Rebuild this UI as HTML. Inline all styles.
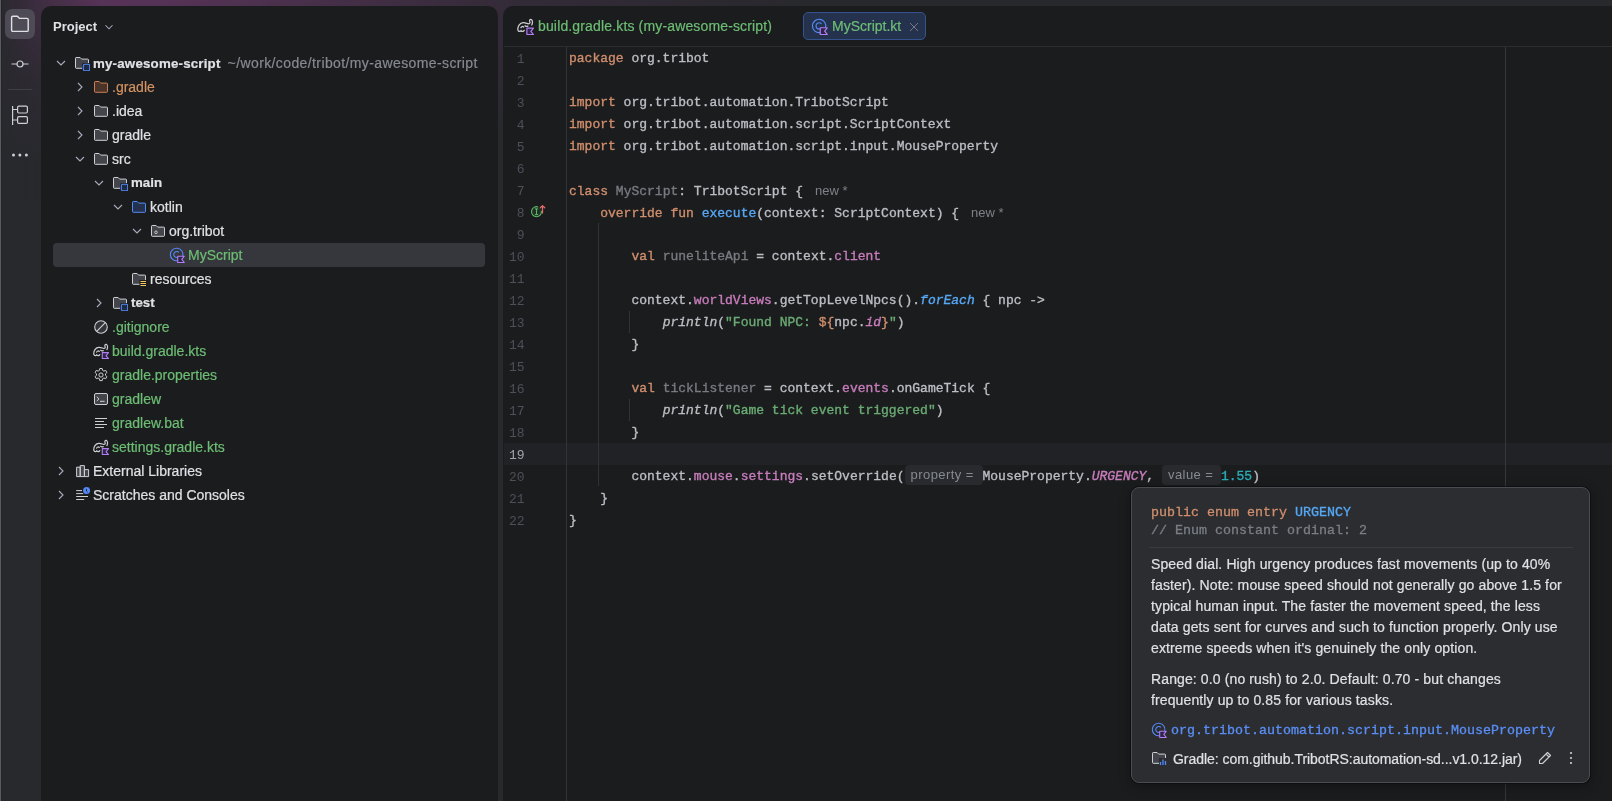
<!DOCTYPE html>
<html><head><meta charset="utf-8">
<style>
*{box-sizing:border-box;margin:0;padding:0}
html,body{width:1612px;height:801px;overflow:hidden}
body{position:relative;font-family:"Liberation Sans",sans-serif;color:#dfe1e5;background:#28292d;}
#bg1{position:absolute;left:0;top:0;width:1612px;height:801px;
background:radial-gradient(ellipse 720px 175px at 100px -15px, rgba(94,52,93,1) 0%, rgba(82,50,84,.92) 22%, rgba(62,45,66,.6) 55%, rgba(40,41,45,0) 100%);}
#bg2{position:absolute;left:0;top:0;width:120px;height:200px;
background:linear-gradient(to right, rgba(40,41,45,.95) 0px, rgba(40,41,45,.5) 40px, rgba(40,41,45,0) 100px);}
.abs{position:absolute}
#strip-edge{position:absolute;left:0;top:0;width:1px;height:801px;background:#5a5c61}
#strip-edge2{position:absolute;left:1px;top:0;width:1px;height:801px;background:#232428}
.island{position:absolute;background:#1b1c1e;border-radius:10px 10px 0 0}
#proj{left:41px;top:6px;width:457px;height:820px}
#edit{left:503px;top:6px;width:1130px;height:820px}
.row{position:absolute;height:24px;line-height:24px;font-size:14px;white-space:pre;color:#dfe1e5;-webkit-text-stroke:0.2px currentColor}
.g{color:#6dbd74 !important}
.o{color:#d39263 !important}
.b{font-weight:bold;font-size:13.3px}
.ln{position:absolute;left:500.6px;width:24px;text-align:right;font-family:"Liberation Mono",monospace;font-size:13px;color:#52565e;height:22px;line-height:22px;margin-top:1.5px}
.cl{position:absolute;left:569px;height:22px;line-height:22px;margin-top:1px;font-family:"Liberation Mono",monospace;font-size:13px;color:#bcbec4;white-space:pre;-webkit-text-stroke:0.35px currentColor}
.k{color:#cf8e6d}
.fn{color:#56a8f5}
.pr{color:#c77dbb}
.it{font-style:italic}
.s{color:#6aab73}
.num{color:#2aacb8}
.gr{color:#777b81}
.hint{font-family:"Liberation Sans",sans-serif;font-size:13px;color:#7d8087;margin-left:12px;-webkit-text-stroke:0}
.inlay{display:inline-block;font-family:"Liberation Sans",sans-serif;font-size:13px;letter-spacing:.45px;color:#868a91;background:#282a2e;border-radius:4px;height:20px;line-height:19px;vertical-align:top;margin-top:-1px;-webkit-text-stroke:0}
.tab{position:absolute;height:27px;line-height:29px;font-size:14px;white-space:pre;-webkit-text-stroke:0.2px currentColor}
#popup{position:absolute;left:1131px;top:487px;width:459px;height:296px;background:#2b2d30;border:1px solid #4a4c51;border-radius:8px;box-shadow:0 0 0 1px rgba(10,10,12,.6),0 3px 12px rgba(0,0,0,.35)}
.pm{position:absolute;left:1151px;font-family:"Liberation Mono",monospace;font-size:13.33px;white-space:pre;height:18px;line-height:18px;-webkit-text-stroke:0.3px currentColor}
.pt{position:absolute;left:1151px;font-size:14px;white-space:pre;color:#dfe1e5;height:21px;line-height:23px;letter-spacing:.12px;-webkit-text-stroke:0.2px currentColor}
</style></head>
<body>
<div id="root" style="position:absolute;left:0;top:0;width:1612px;height:801px;will-change:transform">
<div id="bg1"></div>
<div id="bg2"></div>
<div id="strip-edge"></div><div id="strip-edge2"></div>

<!-- left tool strip -->
<div class="abs" style="left:5px;top:9px;width:30px;height:30px;border-radius:7px;background:#4e4a56"></div>
<svg class="abs" style="left:10px;top:14px" width="20" height="20" viewBox="0 0 20 20"><path d="M1.6 3.6c0-.7.5-1.3 1.2-1.3h4.6l2.2 2.1h7.4c.7 0 1.2.5 1.2 1.2v10.6c0 .7-.5 1.2-1.2 1.2H2.8c-.7 0-1.2-.5-1.2-1.2z" fill="none" stroke="#dfe1e5" stroke-width="1.4" stroke-linejoin="round"/></svg>
<svg class="abs" style="left:10px;top:54px" width="20" height="20" viewBox="0 0 20 20"><circle cx="10" cy="10" r="3" fill="none" stroke="#ced0d6" stroke-width="1.2"/><path d="M1.5 10H7M13 10h5.5" stroke="#ced0d6" stroke-width="1.2"/></svg>
<div class="abs" style="left:8px;top:89px;width:24px;height:1px;background:#3e3f44"></div>
<svg class="abs" style="left:10px;top:104px" width="20" height="22" viewBox="0 0 20 22"><path d="M2.6 2v19M2.6 5.5h4.5M2.6 16h4.5" stroke="#ced0d6" stroke-width="1.2" fill="none"/><rect x="7.6" y="2.2" width="9.8" height="6.8" rx="1.2" fill="none" stroke="#ced0d6" stroke-width="1.2"/><rect x="7.6" y="12.6" width="9.8" height="6.8" rx="1.2" fill="none" stroke="#ced0d6" stroke-width="1.2"/></svg>
<svg class="abs" style="left:10px;top:145px" width="20" height="20" viewBox="0 0 20 20"><circle cx="3.5" cy="10" r="1.5" fill="#ced0d6"/><circle cx="9.9" cy="10" r="1.5" fill="#ced0d6"/><circle cx="16.4" cy="10" r="1.5" fill="#ced0d6"/></svg>

<div id="proj" class="island"></div>
<div id="edit" class="island"></div>

<!-- project header -->
<div class="abs b" style="left:53px;top:18px;font-size:13px;line-height:18px;height:18px;color:#dfe1e5">Project</div>
<svg class="abs" style="left:102px;top:20px" width="14" height="14" viewBox="0 0 16 16"><path d="M4 6l4 4 4-4" fill="none" stroke="#a8adbd" stroke-width="1.2"/></svg>

<div class="abs" style="left:53px;top:243px;width:432px;height:24px;border-radius:4px;background:#35373c"></div>
<svg class="abs" style="left:53px;top:55px" width="16" height="16" viewBox="0 0 16 16"><path d="M4 6l4 4 4-4" fill="none" stroke="#a8adbd" stroke-width="1.1"/></svg>
<svg class="abs" style="left:74px;top:55px" width="16" height="16" viewBox="0 0 16 16"><path d="M1.5 3.2c0-.4.3-.7.7-.7h3.9l1.6 1.6h6.1c.4 0 .7.3.7.7v7.8c0 .4-.3.7-.7.7H2.2c-.4 0-.7-.3-.7-.7z" fill="#43454a" stroke="#ced0d6" stroke-width="1"/><rect x="8" y="8" width="8.5" height="8.5" rx="2" fill="#1b1c1e"/><rect x="9.3" y="9.3" width="6.4" height="6.4" rx="1.4" fill="#1f2b45" stroke="#548af7" stroke-width="1.1"/></svg>
<div class="row b" style="left:93px;top:51px"><span style="letter-spacing:.2px">my-awesome-script</span><span style="color:#868a91;font-weight:normal;font-size:14px;letter-spacing:.39px;margin-left:-1.5px">  ~/work/code/tribot/my-awesome-script</span></div>
<svg class="abs" style="left:72px;top:79px" width="16" height="16" viewBox="0 0 16 16"><path d="M6 4l4 4-4 4" fill="none" stroke="#a8adbd" stroke-width="1.1"/></svg>
<svg class="abs" style="left:93px;top:79px" width="16" height="16" viewBox="0 0 16 16"><path d="M1.5 3.2c0-.4.3-.7.7-.7h3.9l1.6 1.6h6.1c.4 0 .7.3.7.7v7.8c0 .4-.3.7-.7.7H2.2c-.4 0-.7-.3-.7-.7z" fill="#4a3328" stroke="#c98055" stroke-width="1"/></svg>
<div class="row o" style="left:112px;top:75px">.gradle</div>
<svg class="abs" style="left:72px;top:103px" width="16" height="16" viewBox="0 0 16 16"><path d="M6 4l4 4-4 4" fill="none" stroke="#a8adbd" stroke-width="1.1"/></svg>
<svg class="abs" style="left:93px;top:103px" width="16" height="16" viewBox="0 0 16 16"><path d="M1.5 3.2c0-.4.3-.7.7-.7h3.9l1.6 1.6h6.1c.4 0 .7.3.7.7v7.8c0 .4-.3.7-.7.7H2.2c-.4 0-.7-.3-.7-.7z" fill="#43454a" stroke="#ced0d6" stroke-width="1"/></svg>
<div class="row " style="left:112px;top:99px">.idea</div>
<svg class="abs" style="left:72px;top:127px" width="16" height="16" viewBox="0 0 16 16"><path d="M6 4l4 4-4 4" fill="none" stroke="#a8adbd" stroke-width="1.1"/></svg>
<svg class="abs" style="left:93px;top:127px" width="16" height="16" viewBox="0 0 16 16"><path d="M1.5 3.2c0-.4.3-.7.7-.7h3.9l1.6 1.6h6.1c.4 0 .7.3.7.7v7.8c0 .4-.3.7-.7.7H2.2c-.4 0-.7-.3-.7-.7z" fill="#43454a" stroke="#ced0d6" stroke-width="1"/></svg>
<div class="row " style="left:112px;top:123px">gradle</div>
<svg class="abs" style="left:72px;top:151px" width="16" height="16" viewBox="0 0 16 16"><path d="M4 6l4 4 4-4" fill="none" stroke="#a8adbd" stroke-width="1.1"/></svg>
<svg class="abs" style="left:93px;top:151px" width="16" height="16" viewBox="0 0 16 16"><path d="M1.5 3.2c0-.4.3-.7.7-.7h3.9l1.6 1.6h6.1c.4 0 .7.3.7.7v7.8c0 .4-.3.7-.7.7H2.2c-.4 0-.7-.3-.7-.7z" fill="#43454a" stroke="#ced0d6" stroke-width="1"/></svg>
<div class="row " style="left:112px;top:147px">src</div>
<svg class="abs" style="left:91px;top:175px" width="16" height="16" viewBox="0 0 16 16"><path d="M4 6l4 4 4-4" fill="none" stroke="#a8adbd" stroke-width="1.1"/></svg>
<svg class="abs" style="left:112px;top:175px" width="16" height="16" viewBox="0 0 16 16"><path d="M1.5 3.2c0-.4.3-.7.7-.7h3.9l1.6 1.6h6.1c.4 0 .7.3.7.7v7.8c0 .4-.3.7-.7.7H2.2c-.4 0-.7-.3-.7-.7z" fill="#43454a" stroke="#ced0d6" stroke-width="1"/><rect x="8" y="8" width="8.5" height="8.5" rx="2" fill="#1b1c1e"/><rect x="9.3" y="9.3" width="6.4" height="6.4" rx="1.4" fill="#1f2b45" stroke="#548af7" stroke-width="1.1"/></svg>
<div class="row b" style="left:131px;top:171px">main</div>
<svg class="abs" style="left:110px;top:199px" width="16" height="16" viewBox="0 0 16 16"><path d="M4 6l4 4 4-4" fill="none" stroke="#a8adbd" stroke-width="1.1"/></svg>
<svg class="abs" style="left:131px;top:199px" width="16" height="16" viewBox="0 0 16 16"><path d="M1.5 3.2c0-.4.3-.7.7-.7h3.9l1.6 1.6h6.1c.4 0 .7.3.7.7v7.8c0 .4-.3.7-.7.7H2.2c-.4 0-.7-.3-.7-.7z" fill="#25324d" stroke="#548af7" stroke-width="1"/></svg>
<div class="row " style="left:150px;top:195px">kotlin</div>
<svg class="abs" style="left:129px;top:223px" width="16" height="16" viewBox="0 0 16 16"><path d="M4 6l4 4 4-4" fill="none" stroke="#a8adbd" stroke-width="1.1"/></svg>
<svg class="abs" style="left:150px;top:223px" width="16" height="16" viewBox="0 0 16 16"><path d="M1.5 3.2c0-.4.3-.7.7-.7h3.9l1.6 1.6h6.1c.4 0 .7.3.7.7v7.8c0 .4-.3.7-.7.7H2.2c-.4 0-.7-.3-.7-.7z" fill="#43454a" stroke="#ced0d6" stroke-width="1"/><circle cx="6" cy="9.3" r="1.3" fill="none" stroke="#ced0d6" stroke-width=".9"/></svg>
<div class="row " style="left:169px;top:219px">org.tribot</div>
<svg class="abs" style="left:169px;top:247px" width="16" height="16" viewBox="0 0 16 16"><path d="M13.7 9.2A6.3 6.3 0 1 0 8.7 13.7" fill="none" stroke="#548af7" stroke-width="1.1"/><path d="M9.9 5.4A3 3 0 1 0 9.9 9.6" fill="none" stroke="#548af7" stroke-width="1.1"/><path d="M8.7 9.2h6.6l-2.5 3.1 2.5 3.2H8.7z" fill="#2d2447" stroke="#b17ef3" stroke-width="1.1" stroke-linejoin="round"/></svg>
<div class="row g" style="left:188px;top:243px">MyScript</div>
<svg class="abs" style="left:131px;top:271px" width="16" height="16" viewBox="0 0 16 16"><path d="M1.5 3.2c0-.4.3-.7.7-.7h3.9l1.6 1.6h6.1c.4 0 .7.3.7.7v7.8c0 .4-.3.7-.7.7H2.2c-.4 0-.7-.3-.7-.7z" fill="#43454a" stroke="#ced0d6" stroke-width="1"/><rect x="8.5" y="9" width="7" height="6.5" fill="#1b1c1f"/><path d="M9.5 10.5h5.5M9.5 12.5h5.5M9.5 14.5h5.5" stroke="#f2c55c" stroke-width="1.1"/></svg>
<div class="row " style="left:150px;top:267px">resources</div>
<svg class="abs" style="left:91px;top:295px" width="16" height="16" viewBox="0 0 16 16"><path d="M6 4l4 4-4 4" fill="none" stroke="#a8adbd" stroke-width="1.1"/></svg>
<svg class="abs" style="left:112px;top:295px" width="16" height="16" viewBox="0 0 16 16"><path d="M1.5 3.2c0-.4.3-.7.7-.7h3.9l1.6 1.6h6.1c.4 0 .7.3.7.7v7.8c0 .4-.3.7-.7.7H2.2c-.4 0-.7-.3-.7-.7z" fill="#43454a" stroke="#ced0d6" stroke-width="1"/><rect x="8" y="8" width="8.5" height="8.5" rx="2" fill="#1b1c1e"/><rect x="9.3" y="9.3" width="6.4" height="6.4" rx="1.4" fill="#1f2b45" stroke="#548af7" stroke-width="1.1"/></svg>
<div class="row b" style="left:131px;top:291px">test</div>
<svg class="abs" style="left:93px;top:319px" width="16" height="16" viewBox="0 0 16 16"><circle cx="8" cy="8" r="6.3" fill="#43454a" fill-opacity=".6" stroke="#ced0d6" stroke-width="1.1"/><path d="M12.3 3.7 3.7 12.3" stroke="#ced0d6" stroke-width="1.1"/></svg>
<div class="row g" style="left:112px;top:315px">.gitignore</div>
<svg class="abs" style="left:93px;top:343px" width="16" height="16" viewBox="0 0 16 16"><path transform="matrix(1.12 0 0 1.15 -1.8 -1.9)" d="M2.4 11.6C1.9 8.8 3.6 5.9 6.6 5.5 8.6 5.2 10 6.3 11.3 6.4 12.4 6.5 12.8 5.4 12.3 4.5 11.9 3.7 12.6 2.5 13.6 2.9 14.9 3.5 14.8 6.1 14 7.4M2.4 11.6C2.9 12.9 4.3 12.9 5 11.9 5.7 12.9 7 12.9 7.7 11.8M4.9 9.6C5.3 8.5 6.5 8.3 7.2 9M8.4 8C9.1 8.6 10 8.7 10.7 8.3" fill="none" stroke="#ced0d6" stroke-width="1.05" stroke-linecap="round"/><path d="M9.3 9.6h6.2l-2.4 3 2.4 3H9.3z" fill="#2d2447" stroke="#b17ef3" stroke-width="1.1" stroke-linejoin="round"/></svg>
<div class="row g" style="left:112px;top:339px">build.gradle.kts</div>
<svg class="abs" style="left:93px;top:367px" width="16" height="16" viewBox="0 0 16 16"><path d="M6.8 1.5h2.4l.4 1.9 1.3.7 1.8-.7 1.2 2.1-1.4 1.3v1.5l1.4 1.3-1.2 2.1-1.8-.7-1.3.7-.4 1.9H6.8l-.4-1.9-1.3-.7-1.8.7-1.2-2.1 1.4-1.3V6.8L2.1 5.5l1.2-2.1 1.8.7 1.3-.7z" fill="none" stroke="#ced0d6" stroke-width="1" stroke-linejoin="round"/><circle cx="8" cy="8" r="2.1" fill="none" stroke="#ced0d6" stroke-width="1"/></svg>
<div class="row g" style="left:112px;top:363px">gradle.properties</div>
<svg class="abs" style="left:93px;top:391px" width="16" height="16" viewBox="0 0 16 16"><rect x="1.5" y="2.5" width="13" height="11" rx="1.5" fill="#43454a" stroke="#ced0d6" stroke-width="1"/><path d="M3.8 5.8l2.2 2.1-2.2 2.1M7 10.3h4.6" fill="none" stroke="#ced0d6" stroke-width="1"/></svg>
<div class="row g" style="left:112px;top:387px">gradlew</div>
<svg class="abs" style="left:93px;top:415px" width="16" height="16" viewBox="0 0 16 16"><path d="M2 3.5h12M2 6.5h9M2 9.5h12M2 12.5h9" stroke="#ced0d6" stroke-width="1"/></svg>
<div class="row g" style="left:112px;top:411px">gradlew.bat</div>
<svg class="abs" style="left:93px;top:439px" width="16" height="16" viewBox="0 0 16 16"><path transform="matrix(1.12 0 0 1.15 -1.8 -1.9)" d="M2.4 11.6C1.9 8.8 3.6 5.9 6.6 5.5 8.6 5.2 10 6.3 11.3 6.4 12.4 6.5 12.8 5.4 12.3 4.5 11.9 3.7 12.6 2.5 13.6 2.9 14.9 3.5 14.8 6.1 14 7.4M2.4 11.6C2.9 12.9 4.3 12.9 5 11.9 5.7 12.9 7 12.9 7.7 11.8M4.9 9.6C5.3 8.5 6.5 8.3 7.2 9M8.4 8C9.1 8.6 10 8.7 10.7 8.3" fill="none" stroke="#ced0d6" stroke-width="1.05" stroke-linecap="round"/><path d="M9.3 9.6h6.2l-2.4 3 2.4 3H9.3z" fill="#2d2447" stroke="#b17ef3" stroke-width="1.1" stroke-linejoin="round"/></svg>
<div class="row g" style="left:112px;top:435px">settings.gradle.kts</div>
<svg class="abs" style="left:53px;top:463px" width="16" height="16" viewBox="0 0 16 16"><path d="M6 4l4 4-4 4" fill="none" stroke="#a8adbd" stroke-width="1.1"/></svg>
<svg class="abs" style="left:74px;top:463px" width="16" height="16" viewBox="0 0 16 16"><path d="M2.6 13.6V4.2h3.6v9.4zM6.2 13.6V2.6h4.2v11zM10.4 13.6V6.6h4.2v7z" fill="#43454a" stroke="#ced0d6" stroke-width="1" stroke-linejoin="round"/></svg>
<div class="row " style="left:93px;top:459px">External Libraries</div>
<svg class="abs" style="left:53px;top:487px" width="16" height="16" viewBox="0 0 16 16"><path d="M6 4l4 4-4 4" fill="none" stroke="#a8adbd" stroke-width="1.1"/></svg>
<svg class="abs" style="left:74px;top:487px" width="16" height="16" viewBox="0 0 16 16"><path d="M2.2 3.6h5.8M2.2 6.6h7M2.2 9.5h11.8M2.2 12.5h8" stroke="#ced0d6" stroke-width="1"/><circle cx="12.6" cy="3.6" r="3.5" fill="#548af7"/><path d="M12.4 1.9v2.1l1.2 1" fill="none" stroke="#1b1c1e" stroke-width=".9"/></svg>
<div class="row " style="left:93px;top:483px">Scratches and Consoles</div>

<!-- tabs -->
<div class="abs" style="left:504px;top:46px;width:1108px;height:1px;background:#2b2d30"></div>
<svg class="abs" style="left:517px;top:18px" width="17" height="17" viewBox="0 0 16 16"><path transform="matrix(1.12 0 0 1.15 -1.8 -1.9)" d="M2.4 11.6C1.9 8.8 3.6 5.9 6.6 5.5 8.6 5.2 10 6.3 11.3 6.4 12.4 6.5 12.8 5.4 12.3 4.5 11.9 3.7 12.6 2.5 13.6 2.9 14.9 3.5 14.8 6.1 14 7.4M2.4 11.6C2.9 12.9 4.3 12.9 5 11.9 5.7 12.9 7 12.9 7.7 11.8M4.9 9.6C5.3 8.5 6.5 8.3 7.2 9M8.4 8C9.1 8.6 10 8.7 10.7 8.3" fill="none" stroke="#ced0d6" stroke-width="1.05" stroke-linecap="round"/><path d="M9.3 9.6h6.2l-2.4 3 2.4 3H9.3z" fill="#2d2447" stroke="#b17ef3" stroke-width="1.1" stroke-linejoin="round"/></svg>
<div class="tab g" style="left:538px;top:12px;letter-spacing:.15px">build.gradle.kts (my-awesome-script)</div>
<div class="abs" style="left:803px;top:12px;width:123px;height:28px;border-radius:5px;background:#25324d;border:1px solid #35538f"></div>
<svg class="abs" style="left:811px;top:18px" width="17" height="17" viewBox="0 0 16 16"><path d="M13.7 9.2A6.3 6.3 0 1 0 8.7 13.7" fill="none" stroke="#548af7" stroke-width="1.1"/><path d="M9.9 5.4A3 3 0 1 0 9.9 9.6" fill="none" stroke="#548af7" stroke-width="1.1"/><path d="M8.7 9.2h6.6l-2.5 3.1 2.5 3.2H8.7z" fill="#2d2447" stroke="#b17ef3" stroke-width="1.1" stroke-linejoin="round"/></svg>
<div class="tab g" style="left:832px;top:12px">MyScript.kt</div>
<svg class="abs" style="left:909px;top:22px" width="10" height="10" viewBox="0 0 10 10"><path d="M1 1l8 8M9 1l-8 8" stroke="#7d818a" stroke-width=".9"/></svg>

<div class="abs" style="left:504px;top:443px;width:1108px;height:22px;background:#212226"></div>
<div class="abs" style="left:566px;top:47px;width:1px;height:760px;background:#313336"></div>
<div class="abs" style="left:1505px;top:47px;width:1px;height:760px;background:#35373b"></div>
<div class="abs" style="left:598px;top:223px;width:1px;height:263px;background:#303236"></div>
<div class="abs" style="left:629px;top:311px;width:1px;height:22px;background:#303236"></div>
<div class="abs" style="left:629px;top:399px;width:1px;height:22px;background:#303236"></div>
<div class="ln" style="top:47px;color:#4b5059">1</div>
<div class="cl" style="top:47px"><span class="k">package</span> org.tribot</div>
<div class="ln" style="top:69px;color:#4b5059">2</div>
<div class="ln" style="top:91px;color:#4b5059">3</div>
<div class="cl" style="top:91px"><span class="k">import</span> org.tribot.automation.TribotScript</div>
<div class="ln" style="top:113px;color:#4b5059">4</div>
<div class="cl" style="top:113px"><span class="k">import</span> org.tribot.automation.script.ScriptContext</div>
<div class="ln" style="top:135px;color:#4b5059">5</div>
<div class="cl" style="top:135px"><span class="k">import</span> org.tribot.automation.script.input.MouseProperty</div>
<div class="ln" style="top:157px;color:#4b5059">6</div>
<div class="ln" style="top:179px;color:#4b5059">7</div>
<div class="cl" style="top:179px"><span class="k">class</span> <span class="gr">MyScript</span>: TribotScript {<span class="hint">new *</span></div>
<div class="ln" style="top:201px;color:#4b5059">8</div>
<div class="cl" style="top:201px">    <span class="k">override fun</span> <span class="fn">execute</span>(context: ScriptContext) {<span class="hint">new *</span></div>
<div class="ln" style="top:223px;color:#4b5059">9</div>
<div class="ln" style="top:245px;color:#4b5059">10</div>
<div class="cl" style="top:245px">        <span class="k">val</span> <span class="gr">runeliteApi</span> = context.<span class="pr">client</span></div>
<div class="ln" style="top:267px;color:#4b5059">11</div>
<div class="ln" style="top:289px;color:#4b5059">12</div>
<div class="cl" style="top:289px">        context.<span class="pr">worldViews</span>.getTopLevelNpcs().<span class="fn it">forEach</span> { npc -&gt;</div>
<div class="ln" style="top:311px;color:#4b5059">13</div>
<div class="cl" style="top:311px">            <span class="it">println</span>(<span class="s">"Found NPC: </span><span class="k">${</span>npc.<span class="pr it">id</span><span class="k">}</span><span class="s">"</span>)</div>
<div class="ln" style="top:333px;color:#4b5059">14</div>
<div class="cl" style="top:333px">        }</div>
<div class="ln" style="top:355px;color:#4b5059">15</div>
<div class="ln" style="top:377px;color:#4b5059">16</div>
<div class="cl" style="top:377px">        <span class="k">val</span> <span class="gr">tickListener</span> = context.<span class="pr">events</span>.onGameTick {</div>
<div class="ln" style="top:399px;color:#4b5059">17</div>
<div class="cl" style="top:399px">            <span class="it">println</span>(<span class="s">"Game tick event triggered"</span>)</div>
<div class="ln" style="top:421px;color:#4b5059">18</div>
<div class="cl" style="top:421px">        }</div>
<div class="ln" style="top:443px;color:#a1a3ab">19</div>
<div class="ln" style="top:465px;color:#4b5059">20</div>
<div class="cl" style="top:465px">        context.<span class="pr">mouse</span>.<span class="pr">settings</span>.setOverride(<span class="inlay" style="width:78px;padding-left:6px">property =</span>MouseProperty.<span class="pr it">URGENCY</span>, <span class="inlay" style="width:59px;padding-left:6px">value =</span><span class="num">1.55</span>)</div>
<div class="ln" style="top:487px;color:#4b5059">21</div>
<div class="cl" style="top:487px">    }</div>
<div class="ln" style="top:509px;color:#4b5059">22</div>
<div class="cl" style="top:509px">}</div>

<!-- gutter icon line 8 -->
<svg class="abs" style="left:530px;top:204px" width="16" height="16" viewBox="0 0 16 16"><circle cx="6.5" cy="7.7" r="4.6" fill="#1f3426"/><path d="M11.42 6.83A5 5 0 1 1 8.21 3.0" fill="none" stroke="#5fb865" stroke-width="1.1"/><path d="M5 4.9h3M5 10.6h3M6.5 4.9v5.7" stroke="#5fb865" stroke-width="1"/><path d="M12.5 9V1.6M10.3 3.8l2.2-2.2 2.2 2.2" fill="none" stroke="#e06b6b" stroke-width="1.3" stroke-linecap="round" stroke-linejoin="round"/></svg>

<!-- popup -->
<div id="popup"></div>
<div class="pm" style="top:504px"><span class="k">public enum entry</span> <span class="fn">URGENCY</span></div>
<div class="pm" style="top:522px;color:#7a7e85">// Enum constant ordinal: 2</div>
<div class="abs" style="left:1149px;top:547px;width:424px;height:1px;background:#393b40"></div>
<div class="pt" style="top:553px">Speed dial. High urgency produces fast movements (up to 40%</div>
<div class="pt" style="top:574px">faster). Note: mouse speed should not generally go above 1.5 for</div>
<div class="pt" style="top:595px">typical human input. The faster the movement speed, the less</div>
<div class="pt" style="top:616px">data gets sent for curves and such to function properly. Only use</div>
<div class="pt" style="top:637px">extreme speeds when it's genuinely the only option.</div>
<div class="pt" style="top:668px">Range: 0.0 (no rush) to 2.0. Default: 0.70 - but changes</div>
<div class="pt" style="top:689px">frequently up to 0.85 for various tasks.</div>
<svg class="abs" style="left:1151px;top:722px" width="16" height="16" viewBox="0 0 16 16"><path d="M13.7 9.2A6.3 6.3 0 1 0 8.7 13.7" fill="none" stroke="#548af7" stroke-width="1.1"/><path d="M9.9 5.4A3 3 0 1 0 9.9 9.6" fill="none" stroke="#548af7" stroke-width="1.1"/><path d="M8.7 9.2h6.6l-2.5 3.1 2.5 3.2H8.7z" fill="#2d2447" stroke="#b17ef3" stroke-width="1.1" stroke-linejoin="round"/></svg>
<div class="pm" style="left:1171px;top:722px;color:#5a8ef5">org.tribot.automation.script.input.MouseProperty</div>
<svg class="abs" style="left:1151px;top:750px" width="16" height="16" viewBox="0 0 16 16"><path d="M1.5 3.2c0-.4.3-.7.7-.7h3.9l1.6 1.6h6.1c.4 0 .7.3.7.7v7.8c0 .4-.3.7-.7.7H2.2c-.4 0-.7-.3-.7-.7z" fill="#43454a" stroke="#ced0d6" stroke-width="1"/><rect x="8" y="8" width="8" height="8" fill="#2b2d30"/><path d="M9.5 15V12M12 15V9.5M14.5 15v-4" stroke="#548af7" stroke-width="1.3"/></svg>
<div class="pt" style="left:1173px;top:748px;letter-spacing:-.04px">Gradle: com.github.TribotRS:automation-sd...v1.0.12.jar)</div>
<svg class="abs" style="left:1537px;top:750px" width="16" height="16" viewBox="0 0 16 16"><path d="M10.5 2.5l3 3-8 8H2.5v-3z M9 4l3 3" fill="none" stroke="#ced0d6" stroke-width="1.1" stroke-linejoin="round"/></svg>
<svg class="abs" style="left:1563px;top:750px" width="16" height="16" viewBox="0 0 16 16"><circle cx="8" cy="3" r="1.1" fill="#ced0d6"/><circle cx="8" cy="8" r="1.1" fill="#ced0d6"/><circle cx="8" cy="13" r="1.1" fill="#ced0d6"/></svg>

</div>
</body></html>
